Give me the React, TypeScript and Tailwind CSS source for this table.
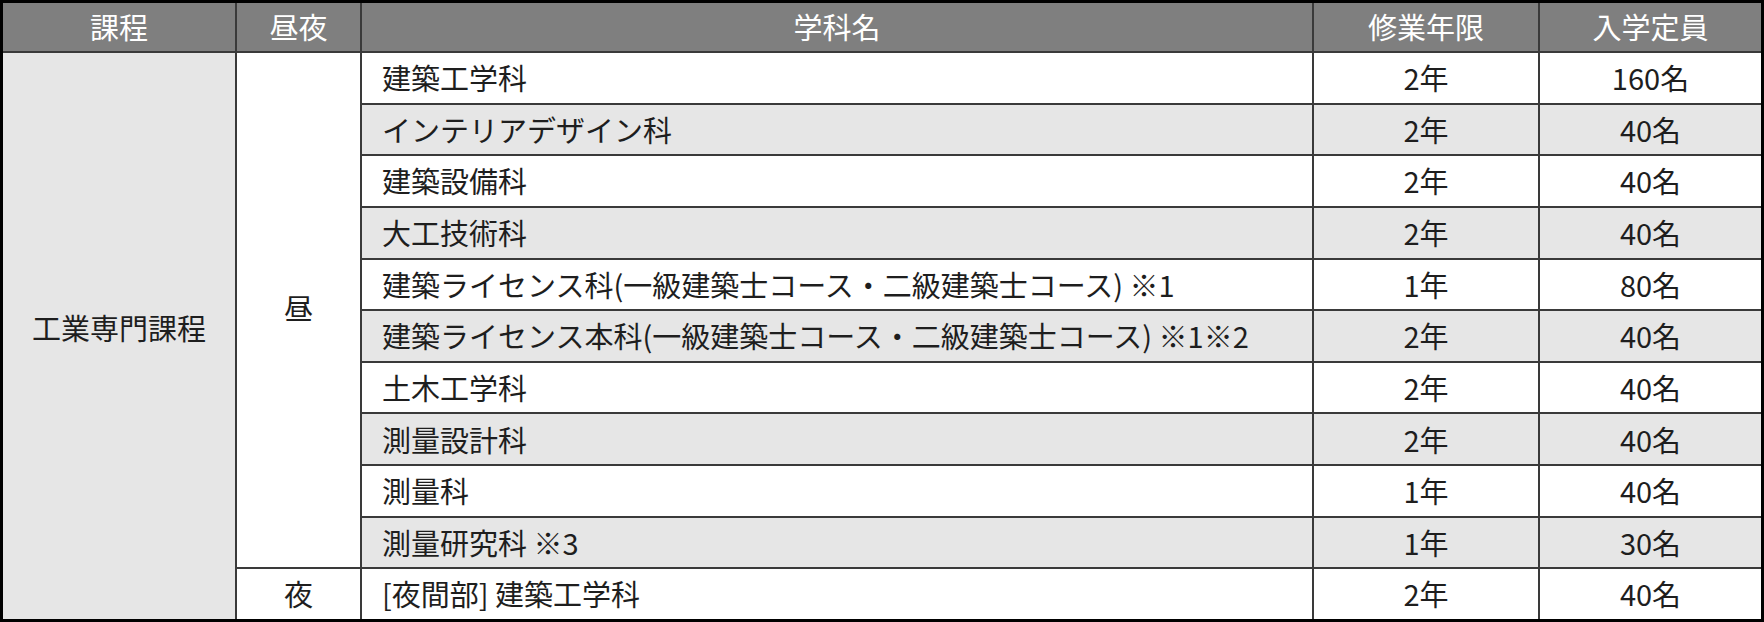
import React from "react";

const rows = [
  { name: "建築工学科", years: "2年", cap: "160名", shade: false },
  { name: "インテリアデザイン科", years: "2年", cap: "40名", shade: true },
  { name: "建築設備科", years: "2年", cap: "40名", shade: false },
  { name: "大工技術科", years: "2年", cap: "40名", shade: true },
  { name: "建築ライセンス科(一級建築士コース・二級建築士コース) ※1", years: "1年", cap: "80名", shade: false },
  { name: "建築ライセンス本科(一級建築士コース・二級建築士コース) ※1※2", years: "2年", cap: "40名", shade: true },
  { name: "土木工学科", years: "2年", cap: "40名", shade: false },
  { name: "測量設計科", years: "2年", cap: "40名", shade: true },
  { name: "測量科", years: "1年", cap: "40名", shade: false },
  { name: "測量研究科 ※3", years: "1年", cap: "30名", shade: true },
];

function Row({ name, years, cap, shade }: { name: string; years: string; cap: string; shade: boolean }) {
  const bg = shade ? "bg-[#e6e6e6]" : "bg-white";
  return (
    <>
      <div className={`${bg} flex items-center pl-[20px] whitespace-nowrap`}>{name}</div>
      <div className={`${bg} flex items-center justify-center`}>{years}</div>
      <div className={`${bg} flex items-center justify-center`}>{cap}</div>
    </>
  );
}

export default function App() {
  return (
    <div className="w-[1764px] h-[622px] bg-white font-['Noto_Sans_CJK_JP','Noto_Sans',sans-serif]">
      <div className="grid h-full grid-cols-[232px_123px_950px_224px_221px] grid-rows-[48px_repeat(11,1fr)] gap-[2px] border-[3px] border-black bg-[#3a3a3a] text-[29px] text-[#1e1e1e]">
        {/* header */}
        {["課程", "昼夜", "学科名", "修業年限", "入学定員"].map((h) => (
          <div key={h} className="flex items-center justify-center bg-[#7f7f7f] text-white">
            {h}
          </div>
        ))}

        <div className="col-start-1 row-span-11 flex items-center justify-center bg-[#e6e6e6] pb-[16px]">
          工業専門課程
        </div>
        <div className="col-start-2 row-span-10 flex items-center justify-center bg-white pb-[4px]">昼</div>

        {rows.map((r, i) => (
          <Row key={i} {...r} />
        ))}

        <div className="col-start-2 flex items-center justify-center bg-white">夜</div>
        <Row name="[夜間部] 建築工学科" years="2年" cap="40名" shade={false} />
      </div>
    </div>
  );
}
